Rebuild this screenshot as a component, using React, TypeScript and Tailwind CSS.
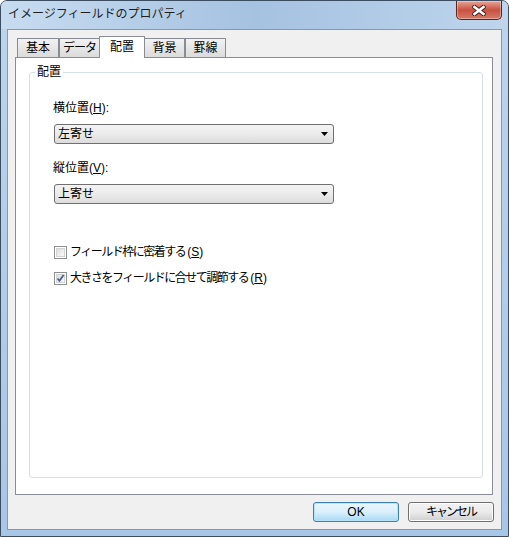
import { ReactNode } from 'react';

const font = "font-['Liberation_Sans','Noto_Sans_CJK_JP',sans-serif]";

const Tab = ({ label, active = false, className = '' }: { label: string; active?: boolean; className?: string }) => {
  if (active) {
    return (
      <div
        className={`relative z-10 -mb-px flex h-[22px] items-start justify-center border border-b-0 border-[#898c95] bg-white pt-[2px] text-[12px] leading-[16px] ${className}`}
      >
        {label}
      </div>
    );
  }
  return (
    <div
      className={`flex h-[19px] items-start justify-center border border-b-0 border-[#898c95] bg-gradient-to-b from-[#f2f2f2] to-[#dbdbdb] pt-px text-[12px] leading-[16px] ${className}`}
    >
      {label}
    </div>
  );
};

const Combo = ({ value }: { value: string }) => (
  <div className="ml-px flex h-[20px] w-[280px] items-center justify-between rounded-[3px] border border-[#707070] bg-gradient-to-b from-[#f3f3f3] via-[#ebebeb] to-[#dcdcdc] pl-[3px] pr-[5px]">
    <span className="text-[12px] leading-[16px]">{value}</span>
    <svg width="7" height="4" viewBox="0 0 7 4">
      <path d="M0 0h7L3.5 4z" fill="#000" />
    </svg>
  </div>
);

const CheckRow = ({ checked, label, accel }: { checked?: boolean; label: string; accel: ReactNode }) => (
  <div className="flex h-[16px] items-center">
    <div className="ml-px flex h-[13px] w-[13px] items-center justify-center border border-[#8e8f8f] bg-white">
      <div className="relative h-[9px] w-[9px] border border-[#d3d3d3] bg-gradient-to-br from-[#dcdcdc] to-[#fbfbfb]">
        {checked && (
          <svg className="absolute -left-px -top-px" width="9" height="9" viewBox="0 0 9 9">
            <path d="M1.5 4.5l2 2.3L7.6 1" fill="none" stroke="#4a5f97" strokeWidth="1.8" />
          </svg>
        )}
      </div>
    </div>
    <span className="ml-[3px] text-[12px] leading-[16px]">
      <span className="tracking-[-1.5px]">{label}</span>
      <span className="ml-[2px]">({accel})</span>
    </span>
  </div>
);

export default function App() {
  return (
    <div
      className={`flex h-[537px] w-[509px] flex-col overflow-hidden rounded-t-[7px] border border-[#3b4d61] bg-gradient-to-b from-[#bdd4ec] to-[#a8c6e6] text-black ${font}`}
    >
      {/* title bar */}
      <div className="flex h-[28px] items-start bg-gradient-to-r from-[#c8dcf0] via-[#a5c2e1] to-[#bed5ec]">
        <span className="pl-[7px] pt-[5px] text-[12px] leading-[16px] text-[#1e1e1e]">
          イメージフィールドのプロパティ
        </span>
        <div className="ml-auto mr-[6px] flex h-[19px] w-[46px] items-center justify-center rounded-b-[5px] border border-t-0 border-[#5a2620] bg-gradient-to-b from-[#e6a498] via-[#c8513f] to-[#d67a68] shadow-[inset_0_0_0_1px_rgba(255,255,255,0.35)]">
          <svg width="14" height="11" viewBox="0 0 14 11">
            <path d="M2.5 2l9 7M11.5 2l-9 7" stroke="#3a1f1f" strokeWidth="4.4" strokeLinecap="square" />
            <path d="M2.5 2l9 7M11.5 2l-9 7" stroke="#fff" strokeWidth="2.6" strokeLinecap="square" />
          </svg>
        </div>
      </div>

      {/* client area */}
      <div className="mx-[6px] mb-[6px] flex flex-1 flex-col border border-[#8a97a8] bg-[#f0f0f0] px-[7px] pt-[6px]">
        <div className="flex h-[21px] items-end pl-[2px]">
          <Tab label="基本" className="w-[42px]" />
          <Tab label="データ" className="w-[41px] tracking-[-1px]" />
          <Tab label="配置" active className="-ml-px w-[46px]" />
          <Tab label="背景" className="-ml-px w-[41px]" />
          <Tab label="罫線" className="w-[41px]" />
        </div>

        <div className="mr-px h-[438px] border border-[#898c95] bg-white pb-[16px] pl-[13px] pr-[9px] pt-[14px]">
          <div className="relative h-full rounded-[3px] border border-[#d5dfe5] pl-[23px]">
            <span className="absolute -top-[9px] left-[5px] bg-white px-[2px] text-[12px] leading-[16px]">配置</span>

            <div className="mt-[27px] text-[12px] leading-[16px]">
              横位置(<u>H</u>):
            </div>
            <div className="mt-[8px]">
              <Combo value="左寄せ" />
            </div>

            <div className="mt-[16px] text-[12px] leading-[16px]">
              縦位置(<u>V</u>):
            </div>
            <div className="mt-[8px]">
              <Combo value="上寄せ" />
            </div>

            <div className="mt-[40px]">
              <CheckRow label="フィールド枠に密着する" accel={<u>S</u>} />
            </div>
            <div className="mt-[10px]">
              <CheckRow checked label="大きさをフィールドに合せて調節する" accel={<u>R</u>} />
            </div>
          </div>
        </div>

        <div className="mt-[7px] flex justify-end gap-[9px]">
          <button className="flex h-[20px] w-[86px] items-center justify-center rounded-[3px] border border-[#3c7fb1] bg-gradient-to-b from-[#eaf6fd] via-[#d9f0fc] to-[#a7d9f5] text-[12px] leading-[16px] shadow-[inset_0_0_0_1px_#b8e4fa]">
            OK
          </button>
          <button className="flex h-[20px] w-[86px] items-center justify-center rounded-[3px] border border-[#707070] bg-gradient-to-b from-[#f2f2f2] via-[#ebebeb] to-[#cfcfcf] text-[12px] leading-[16px] tracking-[-2px] shadow-[inset_0_0_0_1px_#fcfcfc]">
            キャンセル
          </button>
        </div>
      </div>
    </div>
  );
}
